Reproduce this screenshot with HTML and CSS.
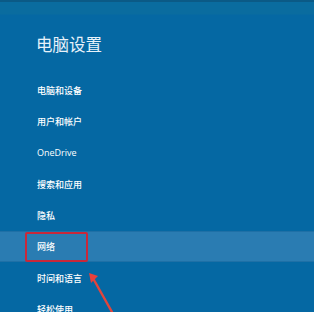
FILE: index.html
```html
<!DOCTYPE html>
<html lang="zh-CN">
<head>
<meta charset="utf-8">
<title>电脑设置</title>
<link rel="stylesheet" href="styles.css">
</head>
<body>
<div class="page">
  <div class="topband"></div>
  <header class="header">
    <h1 class="title">电脑设置</h1>
  </header>
  <ul class="menu">
    <li class="item">电脑和设备</li>
    <li class="item">用户和帐户</li>
    <li class="item latin">OneDrive</li>
    <li class="item">搜索和应用</li>
    <li class="item">隐私</li>
    <li class="item selected"><span class="label">网络</span><span class="marker"></span></li>
    <li class="item">时间和语言</li>
    <li class="item">轻松使用</li>
  </ul>
  <svg class="arrow" width="40" height="50" viewBox="0 0 40 50">
    <line x1="6" y1="8" x2="24" y2="40" stroke="#e2453c" stroke-width="2.4" stroke-linecap="round"/>
    <polygon points="1,1 10,4 3,11" fill="#e8403a"/>
  </svg>
</div>
</body>
</html>
```
FILE: styles.css
```css
html, body {
  margin: 0;
  padding: 0;
}
body {
  background: #0568a3;
  font-family: "Noto Sans CJK SC", "Noto Sans", sans-serif;
  color: #ffffff;
}
.page {
  position: relative;
  width: 314px;
  height: 312px;
  overflow: hidden;
  background: #0568a3;
}
.topband {
  height: 2px;
  background: #0b5a86;
}
.header {
  height: 72.7px;
  background: linear-gradient(#0a6c9f 0, #0a6c9f 12px, #0568a3 13px);
}
.title {
  margin: 0;
  padding: 32px 0 0 36px;
  font-size: 16.5px;
  font-weight: 400;
  line-height: 20px;
  color: #e8f2fa;
}
.menu {
  list-style: none;
  margin: 0;
  padding: 0;
}
.item {
  position: relative;
  height: 31.3px;
  display: flex;
  align-items: center;
  padding-left: 37px;
  font-size: 9px;
  font-weight: 500;
  line-height: 1;
  color: #ffffff;
}
.item.latin {
  font-family: "Open Sans", "Noto Sans", sans-serif;
  font-weight: 500;
  font-size: 9px;
}
.item.selected {
  background: #2a7cb2;
  box-shadow: inset 0 1px 0 #1f70a6, inset 0 -1px 0 #1f70a6;
}
.marker {
  position: absolute;
  left: 25px;
  top: 1px;
  width: 59px;
  height: 26px;
  border: 2px solid #c9283a;
  border-radius: 2px;
}
.arrow {
  position: absolute;
  left: 88px;
  top: 272px;
}
```
